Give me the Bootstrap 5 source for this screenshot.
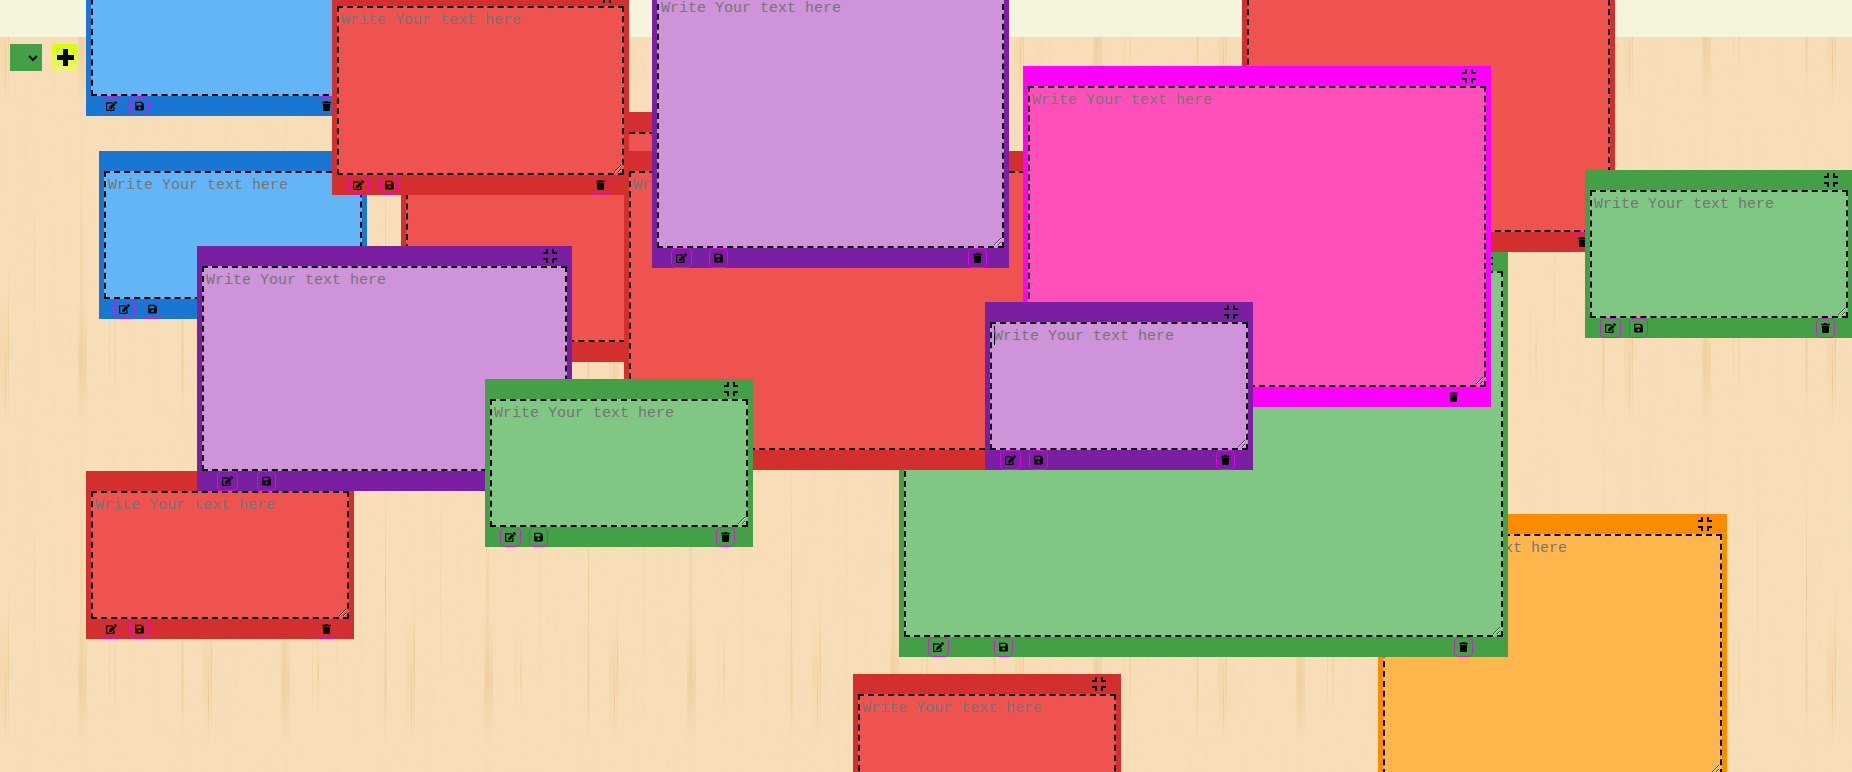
<!DOCTYPE html>
<html lang="en">
<head>
<meta charset="utf-8">
<meta name="viewport" content="width=device-width, initial-scale=1">
<title>Sticky notes</title>
<link rel="stylesheet" href="https://cdn.jsdelivr.net/npm/bootstrap@5.3.0/dist/css/bootstrap.min.css">
<style>
  body { background: #f5f5dc; }
  .desk { padding-top: 37px; }
  .wood {
    padding: 7px 10px;
    background-color: #f8deb7;
    background-image: url("data:image/svg+xml,%3Csvg xmlns='http://www.w3.org/2000/svg' width='203' height='320'%3E%3Cdefs%3E%3ClinearGradient id='a' x1='0' x2='0' y1='0' y2='1'%3E%3Cstop offset='0' stop-color='%23e6b870' stop-opacity='0'/%3E%3Cstop offset='.5' stop-color='%23e6b870' stop-opacity='.45'/%3E%3Cstop offset='1' stop-color='%23e6b870' stop-opacity='0'/%3E%3C/linearGradient%3E%3Cfilter id='n' x='0' y='0' width='100%25' height='100%25'%3E%3CfeTurbulence type='fractalNoise' baseFrequency='.14 .006' numOctaves='3' seed='4' stitchTiles='stitch'/%3E%3CfeColorMatrix values='0 0 0 0 .84 0 0 0 0 .7 0 0 0 0 .5 1.2 0 0 0 -.48'/%3E%3C/filter%3E%3C/defs%3E%3Crect width='203' height='320' filter='url(%23n)' opacity='.5'/%3E%3Cg fill='url(%23a)'%3E%3Crect x='182' y='0' width='1' height='320'/%3E%3Crect x='181' y='200' width='3' height='120' opacity='.5'/%3E%3Crect x='5' y='230' width='1' height='90'/%3E%3Crect x='8' y='150' width='1' height='170'/%3E%3Crect x='0' y='180' width='8' height='130' opacity='.4'/%3E%3Crect x='34' y='20' width='1' height='280' opacity='.4'/%3E%3Crect x='78' y='190' width='9' height='130' opacity='.6'/%3E%3Crect x='80' y='0' width='3' height='320' opacity='.5'/%3E%3Crect x='109' y='190' width='1' height='110' opacity='.6'/%3E%3Crect x='114' y='200' width='2' height='90' opacity='.6'/%3E%3Crect x='133' y='0' width='1' height='320' opacity='.4'/%3E%3C/g%3E%3C/svg%3E");
    background-position: 0 70px;
  }
  .color-pick {
    width: 32px; height: 27px;
    border: 0;
    appearance: none;
    background: #43a047 url("data:image/svg+xml,%3Csvg xmlns='http://www.w3.org/2000/svg' width='10' height='8' fill='none' stroke='%23000' stroke-width='2'%3E%3Cpath d='M1 2l4 4 4-4'/%3E%3C/svg%3E") no-repeat right 4px center;
  }
  .add-note {
    width: 26px; height: 27px;
    border-radius: 4px;
    background: linear-gradient(#d4ff00, #eef27c);
  }
  .note { background: var(--edge); }
  .note-head { height: 20px; padding: 3px 15px; }
  .note-foot {
    display: grid;
    grid-template-columns: 4% 11% 1fr auto 5%;
    height: 20px;
    margin: 0 5px;
  }
  .note-text {
    margin: 0 5px;
    padding: 3px 2px 2px;
    border: 2px dashed #000;
    outline: 0;
    resize: both;
    color: #000;
    background: var(--paper);
    font: 15px/19px "Liberation Mono", "DejaVu Sans Mono", monospace;
  }
  .note-text::placeholder { color: #757575; opacity: 1; }
  /* steady insertion mark in place of the blinking one */
  .note-text:focus:placeholder-shown {
    caret-color: transparent;
    background: linear-gradient(#000, #000) 2px 2px / 1px 19px no-repeat var(--paper);
  }
  .icon-btn { display: flex; padding: 0; border: 0; background: none; color: #000; }
  .icon-btn svg { fill: currentColor; }
  .note-foot .icon-btn {
    align-items: center;
    justify-self: start;
    padding: 0 4px;
    border: 1px solid rgba(240, 0, 240, .8);
    border-radius: 5px;
  }
  .red    { --edge: #d32f2f; --paper: #ef5350; }
  .blue   { --edge: #1976d2; --paper: #64b5f6; }
  .green  { --edge: #43a047; --paper: #81c784; }
  .purple { --edge: #7b1fa2; --paper: #ce93d8; }
  .orange { --edge: #fb8c00; --paper: #ffb74d; }
  .pink   { --edge: #ff00ff; --paper: #ff50b9; }
</style>
</head>
<body>
<svg class="d-none" aria-hidden="true">
  <symbol id="i-edit" viewBox="0 0 576 512"><path d="M402.6 83.2l90.2 90.2c3.8 3.8 3.8 10 0 13.8L274.4 405.6l-92.8 10.3c-12.4 1.4-22.9-9.1-21.5-21.5l10.3-92.8L388.8 83.2c3.8-3.8 10-3.8 13.8 0zm162-22.9l-48.8-48.8c-15.2-15.2-39.9-15.2-55.2 0l-35.4 35.4c-3.8 3.8-3.8 10 0 13.8l90.2 90.2c3.8 3.8 10 3.8 13.8 0l35.4-35.4c15.2-15.3 15.2-40 0-55.2zM384 346.2V448H64V128h229.8c3.2 0 6.2-1.3 8.5-3.5l40-40c7.6-7.6 2.2-20.5-8.5-20.5H48C21.5 64 0 85.5 0 112v352c0 26.5 21.5 48 48 48h352c26.5 0 48-21.5 48-48V306.2c0-10.7-12.9-16-20.5-8.5l-40 40c-2.2 2.3-3.5 5.3-3.5 8.5z"/></symbol>
  <symbol id="i-save" viewBox="0 0 448 512"><path d="M433.9 129.9l-83.8-83.8A48 48 0 0 0 316.1 32H48C21.5 32 0 53.5 0 80v352c0 26.5 21.5 48 48 48h352c26.5 0 48-21.5 48-48V163.9a48 48 0 0 0-14.1-34zM224 416c-35.3 0-64-28.7-64-64s28.7-64 64-64 64 28.7 64 64-28.7 64-64 64zm96-304.5V212c0 6.6-5.4 12-12 12H76c-6.6 0-12-5.400-12-12V108c0-6.600 5.400-12 12-12h228.500c3.200 0 6.200 1.300 8.500 3.500l3.500 3.500c2.200 2.200 3.500 5.300 3.500 8.500z"/></symbol>
  <symbol id="i-trash" viewBox="0 0 448 512"><path d="M432 32H312l-9.4-18.7A24 24 0 0 0 281.1 0H166.8a23.7 23.7 0 0 0-21.4 13.3L136 32H16A16 16 0 0 0 0 48v32a16 16 0 0 0 16 16h416a16 16 0 0 0 16-16V48a16 16 0 0 0-16-16zM53.2 467a48 48 0 0 0 47.9 45h245.8a48 48 0 0 0 47.9-45L416 128H32z"/></symbol>
  <symbol id="i-shrink" viewBox="0 0 14 14"><path d="M3 0h2v5H0V3h3zM9 0h2v3h3v2H9zM0 9h5v5H3v-3H0zM9 9h5v2h-3v3H9z"/></symbol>
</svg>

<main class="desk d-flex flex-column vh-100 position-relative overflow-hidden">
  <div class="wood d-flex align-items-start flex-grow-1" style="gap:10px">
    <select id="color" class="color-pick" aria-label="Note colour">
      <option value="green" aria-label="Green"></option>
    </select>
    <button type="button" class="add-note btn d-flex align-items-center justify-content-center border-0 p-0" aria-label="Add note">
      <svg width="17" height="17" viewBox="0 0 17 17"><path d="M6 0h5v6h6v5h-6v6H6v-6H0V6h6z"/></svg>
    </button>
  </div>
  <div id="notes"></div>
</main>

<template id="note-template">
  <article class="note d-flex flex-column position-absolute">
    <header class="note-head d-flex justify-content-end">
      <button type="button" class="icon-btn" aria-label="Shrink note"><svg width="14" height="14"><use href="#i-shrink"/></svg></button>
    </header>
    <textarea class="note-text flex-grow-1" placeholder="Write Your text here" aria-label="Note text"></textarea>
    <footer class="note-foot">
      <span></span>
      <button type="button" class="icon-btn" aria-label="Edit note"><svg width="11" height="10"><use href="#i-edit"/></svg></button>
      <button type="button" class="icon-btn" aria-label="Save note"><svg width="9" height="10"><use href="#i-save"/></svg></button>
      <button type="button" class="icon-btn" aria-label="Delete note"><svg width="9" height="10"><use href="#i-trash"/></svg></button>
    </footer>
  </article>
</template>

<script src="https://cdn.jsdelivr.net/npm/bootstrap@5.3.0/dist/js/bootstrap.bundle.min.js"></script>
<script>
  // colour, left, top, width, height; later notes lie on top
  const notes = [
    ["orange", 1378, 514, 349, 281],
    ["green",   899, 251, 609, 406],
    ["red",     401, 112, 300, 250],
    ["red",     624, 151, 526, 319],
    ["blue",     86, -52, 268, 168],
    ["blue",     99, 151, 268, 168],
    ["red",    1242, -60, 373, 312],
    ["red",      86, 471, 268, 168],
    ["red",     332, -14, 297, 209],
    ["purple",  652, -26, 357, 294],
    ["pink",   1023,  66, 468, 341],
    ["purple",  197, 246, 375, 245],
    ["green",   485, 379, 268, 168],
    ["green",  1585, 170, 268, 168],
    ["red",     853, 674, 268, 168],
    ["purple",  985, 302, 268, 168]
  ];
  const template = document.getElementById("note-template");
  const holder = document.getElementById("notes");
  for (const [color, left, top, width, height] of notes) {
    const note = template.content.firstElementChild.cloneNode(true);
    note.classList.add(color);
    Object.assign(note.style, { left: left + "px", top: top + "px", width: width + "px", height: height + "px" });
    holder.append(note);
  }
  holder.lastElementChild.querySelector("textarea").focus({ preventScroll: true });
</script>
</body>
</html>
